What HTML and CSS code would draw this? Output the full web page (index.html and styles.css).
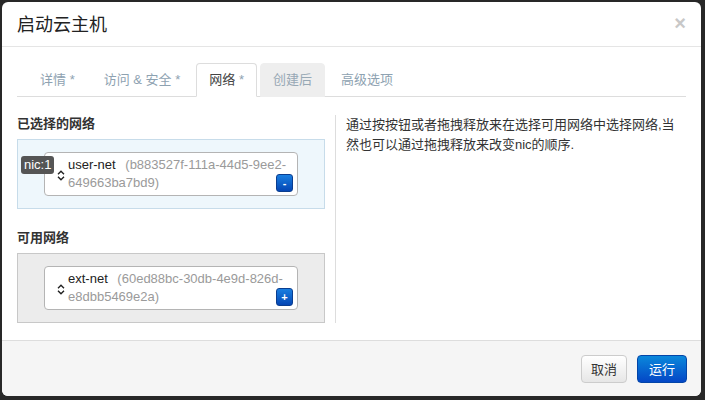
FILE: index.html
```html
<!DOCTYPE html>
<html lang="zh-CN">
<head>
<meta charset="UTF-8" />
<meta name="viewport" content="width=device-width, initial-scale=1" />
<title>启动云主机</title>
<link rel="stylesheet" href="styles.css">
</head>
<body>

  <div class="modal">
    <div class="modal-header">
      <h3>启动云主机</h3>
      <span class="close">&times;</span>
    </div>

    <div class="modal-body">
      <!-- 标签页 -->
      <ul class="nav-tabs">
        <li>详情 <span class="req">*</span></li>
        <li>访问 &amp; 安全 <span class="req">*</span></li>
        <li class="active">网络 <span class="req">*</span></li>
        <li class="disabled">创建后</li>
        <li>高级选项</li>
      </ul>

      <div class="tab-content">
        <div class="col-left">
          <h4>已选择的网络</h4>
          <ul class="net-box selected">
            <li class="net-item">
              <span class="nic">nic:1</span>
              <svg class="sort" width="8" height="11" viewBox="0 0 8 11"><path d="M1 4.2 L4 1.2 L7 4.2 M1 6.8 L4 9.8 L7 6.8" fill="none" stroke="#222" stroke-width="1.4"/></svg>
              <span class="net-text">user-net <span class="net-id">(b883527f-111a-44d5-9ee2-<wbr>649663ba7bd9)</span></span>
              <button class="btn-mini">-</button>
            </li>
          </ul>

          <h4>可用网络</h4>
          <ul class="net-box available">
            <li class="net-item">
              <svg class="sort" width="8" height="11" viewBox="0 0 8 11"><path d="M1 4.2 L4 1.2 L7 4.2 M1 6.8 L4 9.8 L7 6.8" fill="none" stroke="#222" stroke-width="1.4"/></svg>
              <span class="net-text">ext-net <span class="net-id">(60ed88bc-30db-4e9d-826d-<wbr>e8dbb5469e2a)</span></span>
              <button class="btn-mini">+</button>
            </li>
          </ul>
        </div>

        <div class="col-right">
          <p>通过按按钮或者拖拽释放来在选择可用网络中选择网络,当然也可以通过拖拽释放来改变nic的顺序.</p>
        </div>
      </div>
    </div>

    <div class="modal-footer">
      <button class="btn">取消</button>
      <button class="btn btn-primary">运行</button>
    </div>
  </div>

</body>
</html>
```

FILE: styles.css
```css
body {
  font-family: "Liberation Sans", "Noto Sans CJK SC", sans-serif;
  font-size: 13px;
  background: #282828;
  margin: 0;
  padding: 2px 4px 4px 2px;
  color: #333;
}
.modal {
  background: white;
  width: 699px;
  height: 394px;
  border-radius: 6px;
  overflow: hidden;
  display: flex;
  flex-direction: column;
}
.modal-header {
  height: 45px;
  padding: 0 15px 3px;
  box-sizing: border-box;
  border-bottom: 1px solid #e5e5e5;
  display: flex;
  align-items: center;
  justify-content: space-between;
}
.modal-header h3 {
  margin: 0;
  font-size: 18px;
  font-weight: normal;
  color: #222;
}
.close {
  font-size: 20px;
  font-weight: bold;
  color: #c8c8c8;
  line-height: 1;
}
.modal-body {
  flex: 1;
  padding: 16px 15px 0;
}
.nav-tabs {
  list-style: none;
  margin: 0;
  padding: 0 0 0 10px;
  display: flex;
  border-bottom: 1px solid #ddd;
}
.nav-tabs li {
  padding: 0 12px;
  height: 32px;
  line-height: 32px;
  margin-right: 3px;
  margin-bottom: -1px;
  border: 1px solid transparent;
  border-radius: 4px 4px 0 0;
  color: #8ea2b1;
}
.nav-tabs .req {
  color: #8ea2b1;
}
.nav-tabs .active {
  background: white;
  color: #444;
  border-color: #ddd #ddd transparent;
}
.nav-tabs .disabled {
  background: #eee;
  border-color: #eee;
  color: #97a8b5;
}
.tab-content {
  display: grid;
  grid-template-columns: 318px 1fr;
  margin-top: 18px;
}
.col-left {
  padding-right: 10px;
}
.col-left h4 {
  margin: 0 0 6px;
  font-size: 13px;
  line-height: 18px;
  font-weight: bold;
  color: #333;
}
.net-box {
  list-style: none;
  margin: 0 0 20px;
  padding: 12px 26px;
  border: 1px solid #ccc;
}
.net-box:last-child {
  margin-bottom: 0;
}
.selected {
  background: #eef7fc;
  border-color: #c7dcea;
}
.available {
  background: #ececec;
  border-color: #c8c8c8;
}
.net-item {
  position: relative;
  background: white;
  border: 1px solid #b4b4b4;
  border-radius: 4px;
  padding: 3px 8px 3px 12px;
  display: flex;
  align-items: center;
}
.nic {
  position: absolute;
  left: -24px;
  top: 3px;
  background: #555;
  color: white;
  line-height: 18px;
  padding: 0 3px;
  border-radius: 3px;
}
.sort {
  flex: none;
  margin: 2px 3px 0 0;
}
.net-text {
  flex: 1;
  line-height: 18px;
  color: #222;
}
.net-id {
  color: #9a9a9a;
  margin-left: 6px;
}
.btn-mini {
  position: absolute;
  right: 4px;
  bottom: 3px;
  width: 17px;
  height: 18px;
  padding: 0;
  border: 1px solid #0a3d8f;
  border-radius: 3px;
  background: linear-gradient(#1a7fe0, #0446b4);
  color: white;
  font-size: 11px;
  font-weight: bold;
  line-height: 15px;
  font-family: "Liberation Sans", sans-serif;
}
.col-right {
  border-left: 1px solid #ddd;
  padding-left: 10px;
}
.col-right p {
  margin: 0;
  line-height: 20px;
  color: #333;
}
.modal-footer {
  height: 55px;
  border-top: 1px solid #ddd;
  background: #f5f5f5;
  padding: 0 14px 0 15px;
  display: flex;
  align-items: center;
  justify-content: flex-end;
  gap: 10px;
}
.btn {
  height: 28px;
  padding: 0 9px;
  font-family: inherit;
  font-size: 13px;
  color: #333;
  border: 1px solid #ccc;
  border-radius: 4px;
  background: linear-gradient(#fff, #e6e6e6);
}
.btn-primary {
  padding: 0 11px;
  color: white;
  border-color: #0345a8;
  background: linear-gradient(#0a88db, #0447c6);
}
```
